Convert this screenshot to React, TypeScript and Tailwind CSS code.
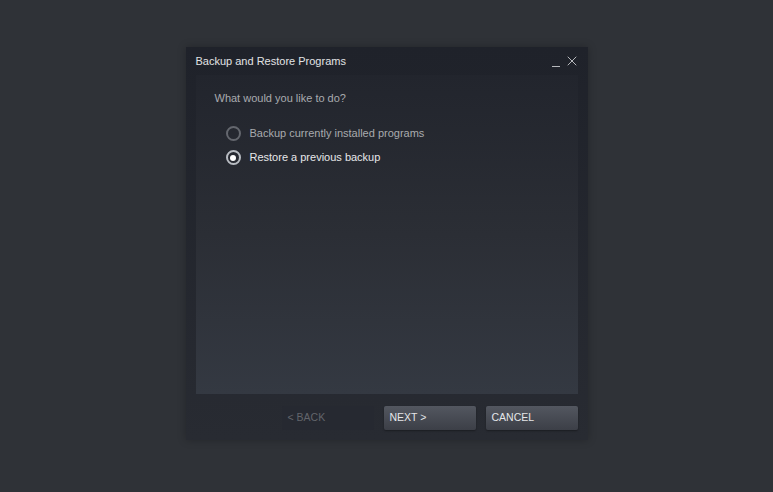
import { X } from "lucide-react";

function Radio({ checked, label }: { checked?: boolean; label: string }) {
  return (
    <div className="flex items-center gap-[9px] h-6">
      <span
        className={
          "flex items-center justify-center w-[15px] h-[15px] rounded-full border-2 " +
          (checked ? "border-[#b8bcc2]" : "border-[#64676e]")
        }
      >
        {checked && <span className="w-[6px] h-[6px] rounded-full bg-[#ffffff]" />}
      </span>
      <span className={checked ? "text-[#e6e7e9]" : "text-[#a9abae]"}>{label}</span>
    </div>
  );
}

function DialogButton({ children, disabled }: { children: string; disabled?: boolean }) {
  return (
    <button
      className={
        "w-[92px] h-[24px] px-[6px] text-left text-[10.5px] rounded-[2px] " +
        (disabled
          ? "bg-[#262931] text-[#62656b]"
          : "bg-gradient-to-b from-[#535760] to-[#3c3f47] text-[#e4e6e9] shadow-[0_1px_2px_rgba(0,0,0,0.35)]")
      }
    >
      {children}
    </button>
  );
}

export default function App() {
  return (
    <div
      className="w-[773px] h-[492px] bg-[#2f3237] flex items-start justify-center pt-[47px]"
      style={{ fontFamily: '"Liberation Sans", Arial, sans-serif' }}
    >
      <div className="w-[402px] h-[393px] flex flex-col bg-gradient-to-b from-[#1f222a] to-[#282b32] shadow-[0_0_8px_rgba(0,0,0,0.25)]">
        <div className="flex items-center justify-between h-[28px] pl-[10px] pr-[8px]">
          <span className="text-[11px] text-[#e2e3e5]">Backup and Restore Programs</span>
          <div className="flex items-end gap-[4px] text-[#b7b9bd]">
            <span className="w-[8px] h-[1.5px] bg-[#b7b9bd] mb-[2px]" />
            <X size={16} strokeWidth={1.5} />
          </div>
        </div>
        <div className="mx-[10px] flex-1 flex flex-col bg-gradient-to-b from-[#22252d] via-[#2b2e35] to-[#343942]">
          <div className="pl-[19px] pt-[15px] text-[11px] text-[#a9abae]">What would you like to do?</div>
          <div className="pl-[30px] pt-[15px] flex flex-col text-[11px]">
            <Radio label="Backup currently installed programs" />
            <Radio checked label="Restore a previous backup" />
          </div>
        </div>
        <div className="h-[46px] mx-[10px] flex items-center justify-end gap-[10px] pt-[1px]">
          <DialogButton disabled>&lt; BACK</DialogButton>
          <DialogButton>NEXT &gt;</DialogButton>
          <DialogButton>CANCEL</DialogButton>
        </div>
      </div>
    </div>
  );
}
